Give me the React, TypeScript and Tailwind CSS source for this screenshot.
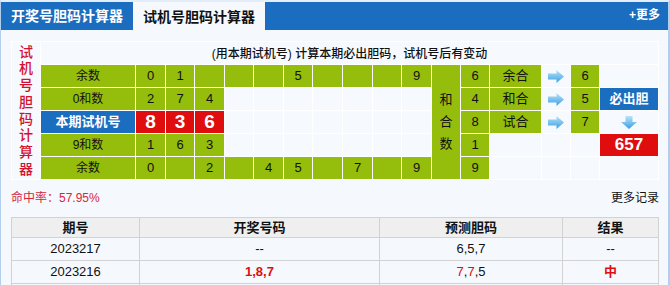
import React from "react";

const G = "bg-[#95bd0c]";
const E = "bg-[#f6faff]";

function RightArrow() {
  return (
    <svg width="16" height="13" viewBox="0 0 16 13">
      <defs>
        <linearGradient id="ra" x1="0" y1="0" x2="0" y2="1">
          <stop offset="0" stopColor="#b9e3fa" />
          <stop offset="1" stopColor="#3a9fe0" />
        </linearGradient>
      </defs>
      <path d="M0 3.5 H8.5 V0 L16 6.5 L8.5 13 V9.5 H0 Z" fill="url(#ra)" />
    </svg>
  );
}

function DownArrow() {
  return (
    <svg width="16" height="13" viewBox="0 0 16 13">
      <defs>
        <linearGradient id="da" x1="0" y1="0" x2="0" y2="1">
          <stop offset="0" stopColor="#b9e3fa" />
          <stop offset="1" stopColor="#3a9fe0" />
        </linearGradient>
      </defs>
      <path d="M4.5 0 H11.5 V6 H16 L8 13 L0 6 H4.5 Z" fill="url(#da)" />
    </svg>
  );
}

function C({ bg = G, children, className = "" }: { bg?: string; children?: React.ReactNode; className?: string }) {
  return <div className={`${bg} flex items-center justify-center ${className}`}>{children}</div>;
}

export default function App() {
  const row1 = ["0", "1", "", "", "", "5", "", "", "", "9"];
  const row5 = ["0", "", "2", "", "4", "5", "", "7", "", "9"];
  const empties7 = Array.from({ length: 7 });
  return (
    <div className="w-[670px] h-[285px] overflow-hidden bg-[#f5f9fe] border-l border-r-2 border-t-2 border-[#b3cfee] border-t-[#e3eefa] font-['Liberation_Sans','Noto_Sans_CJK_SC',sans-serif] text-[12px] text-[#111]">
      {/* header */}
      <div className="h-[28px] bg-[#1b6dbf] flex items-end">
        <div className="w-[132px] h-[28px] flex items-center justify-center text-white font-bold text-[14px] leading-none pb-[1px]">
          开奖号胆码计算器
        </div>
        <div className="w-[132px] h-[29px] -mb-px bg-[#f5f9fe] flex items-center justify-center text-[#111] font-bold text-[14px] leading-none">
          试机号胆码计算器
        </div>
        <div className="flex-1" />
        <div className="h-[28px] flex items-center pr-[8px] text-white font-bold text-[12px] pb-[2px]">+更多</div>
      </div>

      {/* main calc table */}
      <div className="pl-[10px] pt-[11px]">
        <div className="w-[648px] bg-white p-px gap-px grid grid-cols-[28px_94px_29px_28px_29px_28px_29px_28px_29px_29px_28px_29px_28px_28px_51px_28px_28px_58px] grid-rows-[22px_22px_22px_22px_22px_22px]">
          <div className={`${E} row-span-6 flex flex-col items-center justify-center text-[#d3112f] text-[14px] leading-[16.7px] font-medium`}>
            {"试机号胆码计算器".split("").map((ch, i) => (
              <span key={i}>{ch}</span>
            ))}
          </div>
          <div className={`${E} col-span-17 flex items-center justify-center font-medium text-[12px] text-[#111] pt-[2px]`}>
            (用本期试机号) 计算本期必出胆码，试机号后有变动
          </div>

          {/* row 1 */}
          <C>余数</C>
          {row1.map((d, i) => (
            <C key={"a" + i} className="text-[13px]">{d}</C>
          ))}
          <C className="row-span-5 flex-col text-[13px] leading-[22px]">
            <span>和</span>
            <span>合</span>
            <span>数</span>
          </C>
          <C className="text-[13px]">6</C>
          <C className="text-[13px]">余合</C>
          <C bg={E}><RightArrow /></C>
          <C className="text-[13px]">6</C>
          <C bg={E} />

          {/* row 2 */}
          <C>0和数</C>
          {["2", "7", "4"].map((d, i) => (
            <C key={"b" + i} className="text-[13px]">{d}</C>
          ))}
          {empties7.map((_, i) => (
            <C key={"be" + i} bg={E} />
          ))}
          <C className="text-[13px]">4</C>
          <C className="text-[13px]">和合</C>
          <C bg={E}><RightArrow /></C>
          <C className="text-[13px]">5</C>
          <C bg="bg-[#1b6dbf]" className="text-white font-bold text-[13px]">必出胆</C>

          {/* row 3 */}
          <C bg="bg-[#1b6dbf]" className="text-white font-bold text-[13px]">本期试机号</C>
          {["8", "3", "6"].map((d, i) => (
            <C key={"c" + i} bg="bg-[#e00d0f]" className="text-white font-bold text-[19px]">{d}</C>
          ))}
          {empties7.map((_, i) => (
            <C key={"ce" + i} bg={E} />
          ))}
          <C className="text-[13px]">8</C>
          <C className="text-[13px]">试合</C>
          <C bg={E}><RightArrow /></C>
          <C className="text-[13px]">7</C>
          <C bg={E}><DownArrow /></C>

          {/* row 4 */}
          <C>9和数</C>
          {["1", "6", "3"].map((d, i) => (
            <C key={"d" + i} className="text-[13px]">{d}</C>
          ))}
          {empties7.map((_, i) => (
            <C key={"de" + i} bg={E} />
          ))}
          <C className="text-[13px]">1</C>
          <C bg={E} />
          <C bg={E} />
          <C bg={E} />
          <C bg="bg-[#e00d0f]" className="text-white font-bold text-[17px]">657</C>

          {/* row 5 */}
          <C>余数</C>
          {row5.map((d, i) => (
            <C key={"e" + i} className="text-[13px]">{d}</C>
          ))}
          <C className="text-[13px]">9</C>
          <C bg={E} />
          <C bg={E} />
          <C bg={E} />
          <C bg={E} />
        </div>
      </div>

      {/* hit rate row */}
      <div className="w-[648px] ml-[10px] h-[37px] flex items-center justify-between pb-[1px]">
        <span className="text-[#d8253c]">命中率：57.95%</span>
        <span className="text-[#111]">更多记录</span>
      </div>

      {/* history table */}
      <div className="ml-[10px]">
        <table className="w-[648px] border-collapse table-fixed text-[12px]">
          <colgroup>
            <col className="w-[128px]" />
            <col className="w-[240px]" />
            <col className="w-[183px]" />
            <col />
          </colgroup>
          <thead>
            <tr className="h-[20px] bg-[#efefef]">
              <th className="border border-[#d2d2d2] font-bold text-[13px] leading-none">期号</th>
              <th className="border border-[#d2d2d2] font-bold text-[13px] leading-none">开奖号码</th>
              <th className="border border-[#d2d2d2] font-bold text-[13px] leading-none">预测胆码</th>
              <th className="border border-[#d2d2d2] font-bold text-[13px] leading-none">结果</th>
            </tr>
          </thead>
          <tbody>
            <tr className="h-[23px]">
              <td className="border border-[#d2d2d2] text-center text-[13px]">2023217</td>
              <td className="border border-[#d2d2d2] text-center text-[13px]">--</td>
              <td className="border border-[#d2d2d2] text-center text-[13px]">6,5,7</td>
              <td className="border border-[#d2d2d2] text-center text-[13px]">--</td>
            </tr>
            <tr className="h-[23px]">
              <td className="border border-[#d2d2d2] text-center text-[13px]">2023216</td>
              <td className="border border-[#d2d2d2] text-center text-[13px] font-bold text-[#e00d0f]">1,8,7</td>
              <td className="border border-[#d2d2d2] text-center text-[13px]">
                <span className="text-[#e00d0f]">7</span>,<span className="text-[#e00d0f]">7</span>,5
              </td>
              <td className="border border-[#d2d2d2] text-center text-[13px] font-bold text-[#e00d0f]">中</td>
            </tr>
            <tr className="h-[23px]">
              <td className="border border-[#d2d2d2]" />
              <td className="border border-[#d2d2d2]" />
              <td className="border border-[#d2d2d2]" />
              <td className="border border-[#d2d2d2]" />
            </tr>
          </tbody>
        </table>
      </div>
    </div>
  );
}
